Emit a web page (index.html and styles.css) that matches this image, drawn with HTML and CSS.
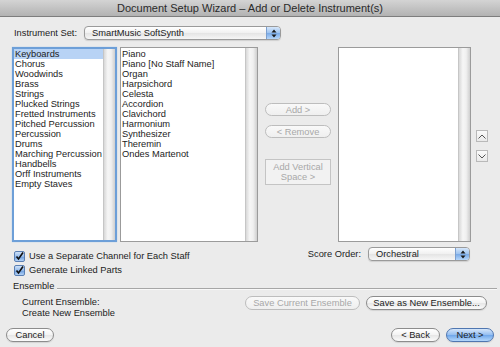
FILE: index.html
```html
<!DOCTYPE html>
<html lang="en">
<head>
  <meta charset="UTF-8">
  <title>Document Setup Wizard</title>
  <link rel="stylesheet" href="styles.css">
</head>
<body>
  <div class="window">
    <div class="titlebar">Document Setup Wizard – Add or Delete Instrument(s)</div>

    <div class="set-row">
      <span class="label">Instrument Set:</span>
      <div class="popup set-popup">
        <span class="popup-text">SmartMusic SoftSynth</span>
        <span class="popup-arrows">
          <svg width="6" height="9" viewBox="0 0 6 9"><path d="M3 0.5 L5.5 3.5 H0.5 Z M3 8.5 L5.5 5.5 H0.5 Z" fill="#1a1a1a"/></svg>
        </span>
      </div>
    </div>

    <div class="lists">
      <div class="list focus cat-list">
        <ul class="items">
          <li class="selected">Keyboards</li>
          <li>Chorus</li>
          <li>Woodwinds</li>
          <li>Brass</li>
          <li>Strings</li>
          <li>Plucked Strings</li>
          <li>Fretted Instruments</li>
          <li>Pitched Percussion</li>
          <li>Percussion</li>
          <li>Drums</li>
          <li>Marching Percussion</li>
          <li>Handbells</li>
          <li>Orff Instruments</li>
          <li>Empty Staves</li>
        </ul>
        <div class="scrollbar"></div>
      </div>

      <div class="list inst-list">
        <ul class="items">
          <li>Piano</li>
          <li>Piano [No Staff Name]</li>
          <li>Organ</li>
          <li>Harpsichord</li>
          <li>Celesta</li>
          <li>Accordion</li>
          <li>Clavichord</li>
          <li>Harmonium</li>
          <li>Synthesizer</li>
          <li>Theremin</li>
          <li>Ondes Martenot</li>
        </ul>
        <div class="scrollbar"></div>
      </div>

      <div class="mid-buttons">
        <button class="pill disabled add-btn">Add &gt;</button>
        <button class="pill disabled remove-btn">&lt; Remove</button>
        <button class="square disabled">Add Vertical<br>Space &gt;</button>
      </div>

      <div class="list score-list">
        <ul class="items"></ul>
        <div class="scrollbar"></div>
      </div>

      <div class="order-buttons">
        <button class="arrow-btn up-btn">
          <svg width="8" height="5" viewBox="0 0 8 5"><path d="M0.5 4.5 L4 1 L7.5 4.5" fill="none" stroke="#555" stroke-width="1"/></svg>
        </button>
        <button class="arrow-btn">
          <svg width="8" height="5" viewBox="0 0 8 5"><path d="M0.5 0.5 L4 4 L7.5 0.5" fill="none" stroke="#555" stroke-width="1"/></svg>
        </button>
      </div>
    </div>

    <div class="options-row">
      <div class="checks">
        <label class="check"><span class="box"><svg width="9" height="9" viewBox="0 0 9 9"><path d="M1.5 4.5 L3.5 7 L8 0.5" fill="none" stroke="#111" stroke-width="1.6"/></svg></span>Use a Separate Channel for Each Staff</label>
        <label class="check"><span class="box"><svg width="9" height="9" viewBox="0 0 9 9"><path d="M1.5 4.5 L3.5 7 L8 0.5" fill="none" stroke="#111" stroke-width="1.6"/></svg></span>Generate Linked Parts</label>
      </div>
      <div class="score-order">
        <span class="label">Score Order:</span>
        <div class="popup order-popup">
          <span class="popup-text">Orchestral</span>
          <span class="popup-arrows">
            <svg width="6" height="9" viewBox="0 0 6 9"><path d="M3 0.5 L5.5 3.5 H0.5 Z M3 8.5 L5.5 5.5 H0.5 Z" fill="#1a1a1a"/></svg>
          </span>
        </div>
      </div>
    </div>

    <div class="group-head">
      <span>Ensemble</span>
      <div class="rule"></div>
    </div>

    <div class="ensemble-row">
      <div class="ensemble-info">
        <div>Current Ensemble:</div>
        <div>Create New Ensemble</div>
      </div>
      <button class="pill disabled save-current">Save Current Ensemble</button>
      <button class="pill save-new">Save as New Ensemble...</button>
    </div>

    <div class="footer">
      <button class="pill cancel-btn">Cancel</button>
      <div class="nav-btns">
        <button class="pill back-btn">&lt; Back</button>
        <button class="pill default next-btn">Next &gt;</button>
      </div>
    </div>
  </div>
</body>
</html>
```

FILE: styles.css
```css
:root {
  --bg: #ebebeb;
  --text: #1c1c1c;
  --muted: #a8a8a8;
  --border: #8d8d8d;
  --focus: #6d9fd8;
  --select: #b8d3f5;
}
body {
  margin: 0;
  background: var(--bg);
  font-family: "Liberation Sans", Arial, sans-serif;
  font-size: 9.3px;
  color: var(--text);
}
.window {
  width: 500px;
  height: 347px;
  overflow: hidden;
}
.titlebar {
  height: 16px;
  line-height: 17px;
  text-align: center;
  font-size: 11px;
  color: #2a2a2a;
  background: linear-gradient(#d4d4d4, #b2b2b2);
  border-bottom: 1px solid #7d7d7d;
}

/* popups */
.popup {
  display: flex;
  align-items: stretch;
  height: 12px;
  border: 1px solid #9a9a9a;
  border-radius: 4px;
  background: linear-gradient(#ffffff, #f0f0f0 50%, #e4e4e4 51%, #f6f6f6);
  box-shadow: 0 1px 1px rgba(0,0,0,0.12);
  overflow: hidden;
}
.popup-text {
  flex: 1;
  padding-left: 7px;
  line-height: 12px;
}
.popup-arrows {
  width: 13px;
  display: flex;
  align-items: center;
  justify-content: center;
  border-left: 1px solid #7b9fcf;
  background: linear-gradient(#d6e7fb, #9cc2ef 50%, #78a9e6 51%, #b5d6fa);
}
.set-row {
  display: flex;
  align-items: center;
  padding-left: 14px;
  margin-top: 9px;
  height: 14px;
}
.set-popup {
  margin-left: 7px;
  width: 195px;
}

/* lists */
.lists {
  display: flex;
  margin-top: 7px;
  padding-left: 12px;
  height: 195px;
}
.list {
  display: flex;
  background: #fff;
  border: 1px solid #9b9b9b;
  box-sizing: border-box;
}
.list.focus {
  border: 2px solid var(--focus);
  box-shadow: 0 0 1px #9cc1ea;
}
.items {
  flex: 1;
  list-style: none;
  margin: 0;
  padding: 1px 0 0;
}
.list.focus .items { padding-top: 0; }
.items li {
  height: 10px;
  line-height: 11px;
  padding-left: 1px;
  white-space: nowrap;
}
.items li.selected {
  background: var(--select);
}
.scrollbar {
  width: 11px;
  border-left: 1px solid #c6c6c6;
  background: linear-gradient(90deg, #d8d8d8, #f6f6f6 35%, #f0f0f0 65%, #cfcfcf);
}
.cat-list { width: 105px; }
.inst-list { width: 138px; margin-left: 3px; }
.score-list { width: 133px; margin-left: 7px; }

/* buttons */
button {
  font-family: inherit;
  font-size: 9.3px;
  color: var(--text);
  padding: 0;
  margin: 0;
}
.pill {
  height: 14px;
  line-height: 12px;
  border: 1px solid #8c8c8c;
  border-radius: 7px;
  background: linear-gradient(#ffffff, #f3f3f3 50%, #e6e6e6 51%, #fbfbfb);
  box-shadow: 0 1px 1px rgba(0,0,0,0.1);
}
.pill.disabled {
  color: var(--muted);
  border-color: #bdbdbd;
  background: linear-gradient(#f9f9f9, #efefef);
  box-shadow: none;
}
.mid-buttons {
  width: 66px;
  margin-left: 7px;
  display: flex;
  flex-direction: column;
}
.add-btn { margin-top: 56px; height: 13px; }
.remove-btn { margin-top: 9px; height: 13px; }
.square {
  margin-top: 21px;
  height: 26px;
  line-height: 10px;
  border: 1px solid #c4c4c4;
  background: #f2f2f2;
}
.square.disabled { color: var(--muted); }
.order-buttons {
  display: flex;
  flex-direction: column;
  margin-left: 5px;
  padding-top: 83px;
  gap: 8px;
}
.arrow-btn {
  width: 12px;
  height: 12px;
  border: 1px solid #b9b9b9;
  background: linear-gradient(#fafafa, #e9e9e9);
  display: flex;
  align-items: center;
  justify-content: center;
}

/* options */
.options-row {
  display: flex;
  justify-content: space-between;
  height: 37px;
  padding: 0 30px 0 14px;
}
.checks {
  padding-top: 9px;
  display: flex;
  flex-direction: column;
  gap: 4px;
}
.check {
  display: flex;
  align-items: center;
  height: 10px;
}
.box {
  width: 9px;
  height: 9px;
  margin-right: 4px;
  border: 1px solid #5a7fb3;
  border-radius: 2px;
  background: linear-gradient(#cfe2f8, #8fb7ea 55%, #6fa0df 56%, #b3d2f6);
  display: flex;
  align-items: center;
  justify-content: center;
}
.score-order {
  display: flex;
  align-items: center;
  height: 14px;
  margin-top: 5px;
}
.order-popup {
  width: 100px;
  margin-left: 7px;
}

/* ensemble */
.group-head {
  display: flex;
  align-items: center;
  height: 14px;
  padding: 0 3px 0 13px;
}
.rule {
  flex: 1;
  height: 1px;
  margin-left: 3px;
  margin-top: 5px;
  background: #a6a6a6;
  border-bottom: 1px solid #f8f8f8;
}
.ensemble-row {
  display: flex;
  align-items: flex-start;
  padding: 2px 0 0 22px;
  height: 33px;
}
.ensemble-info {
  width: 223px;
  line-height: 11px;
  padding-top: 2px;
}
.save-current { width: 115px; margin-top: 1px; }
.save-new { width: 121px; margin-left: 6px; margin-top: 1px; }

/* footer */
.footer {
  display: flex;
  justify-content: space-between;
  padding: 0 6px;
}
.cancel-btn { width: 48px; }
.nav-btns {
  display: flex;
  gap: 6px;
}
.back-btn { width: 49px; }
.next-btn {
  width: 48px;
  border-color: #4f76b0;
  background: linear-gradient(#d5e6fa, #93bdf0 50%, #6ea6ea 51%, #b4d7fb);
}
```
